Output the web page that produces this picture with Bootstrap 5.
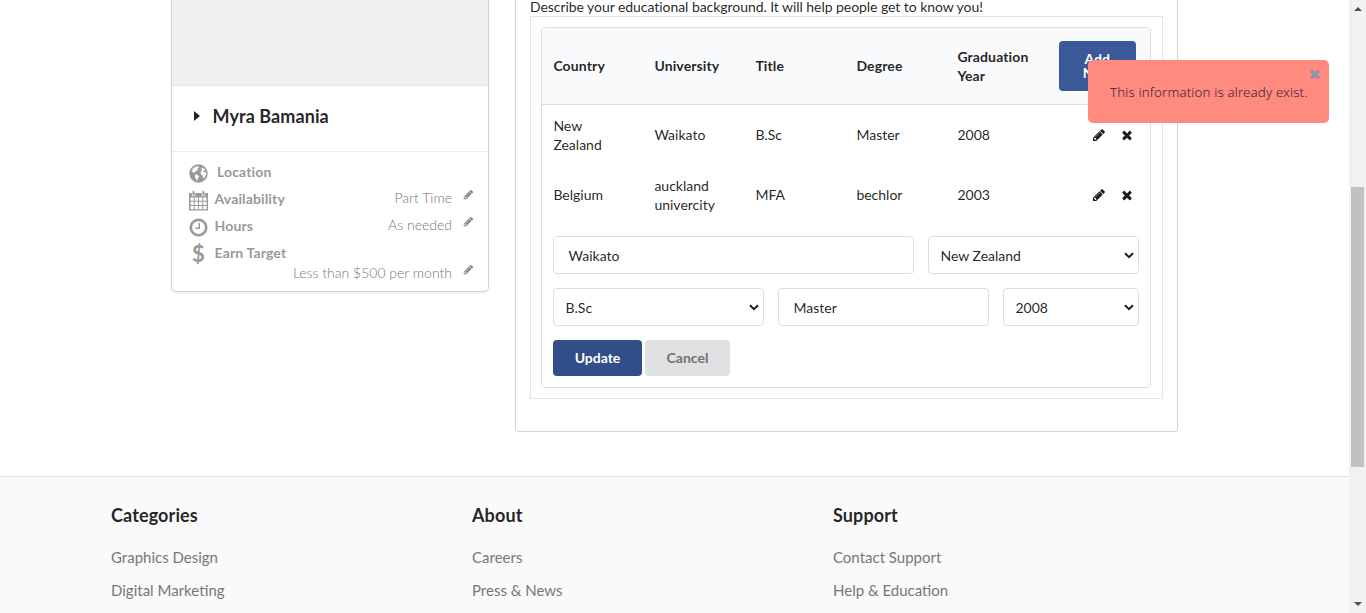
<!DOCTYPE html>
<html lang="en">
<head>
<meta charset="utf-8">
<title>Profile</title>
<meta name="viewport" content="width=device-width, initial-scale=1">
<link href="https://cdn.jsdelivr.net/npm/bootstrap@5.3.0/dist/css/bootstrap.min.css" rel="stylesheet">
<script src="https://cdn.jsdelivr.net/npm/bootstrap@5.3.0/dist/js/bootstrap.bundle.min.js" defer></script>
<style>
html,body{height:100%;overflow:hidden}
body{font-family:Lato,"Liberation Sans",sans-serif;font-size:14px;line-height:19px;color:rgba(0,0,0,.87);background:#fff}
.upper{height:476px;padding-left:172px;gap:27px}
.profile{width:316px;height:291px;border-radius:0 0 4px 4px;box-shadow:0 1px 3px 0 #d4d4d5,0 0 0 1px #d4d4d5}
.photo{height:86px;background:#f0f0f0;border-bottom:1px solid #e6e6e6}
.person{height:66px;border-bottom:1px solid #ececec;padding:0 0 4px 22px;font-size:18px;font-weight:700;letter-spacing:.08px}
.caret{width:0;height:0;border:5px solid transparent;border-left:6px solid #222;border-right:0;margin:-2px 12.5px 0 0}
.facts{padding:10px 14px 0 16px;color:#999}
.fact{height:27px}
.fact b{font-weight:700;letter-spacing:.14px}
.fact .ico{width:21px;height:21px;margin:1px 5.5px 0 0;fill:#999}
.val{font-weight:300;color:#777;font-size:14px;margin-top:-1px}
.val.last{margin-top:0}
.val svg{width:11px;height:11px;fill:#888;margin:-11px 0 0 11px}
.fact .dollar{font-size:22px;line-height:20px;text-align:center;font-weight:700}
.segment{width:663px;height:432px;border:1px solid #d4d4d5;border-top:0;border-radius:0 0 4px 4px;padding:0 14px}
.intro{height:16px;line-height:19px;margin-top:-3px;letter-spacing:-.055px}
.frame{height:383px;border:1px solid #e3e4e5;padding:10px 11px 10px 10px;margin-top:3px}
.sheet{height:361px;border:1px solid #dededf;border-radius:4px;overflow:hidden}
.line{display:grid;grid-template-columns:repeat(6,101px);height:60px;align-items:center;padding-bottom:1px}
.line>*{padding:0 11px 0 11.4px}
.line.top{height:77px;background:#f9fafb;border-bottom:1px solid #dededf;font-weight:700;letter-spacing:.12px}
.tools{gap:14px;padding-right:14px!important}
.line svg{width:14px;height:14px;fill:#1b1c1d}
.btn-add{width:77px;height:50px;margin-left:.4px;background:#3b5998;color:#fff;font-weight:700;line-height:14px;border-radius:4px;padding:0 20px;border:0;font-size:14px}
.fields{padding:11px 11px 0;gap:14px}
.fld{height:38px;border:1px solid #dededf;border-radius:4px;font-size:14px;padding:0 14px 0 14.5px;background:#fff}
.pick{padding:0 4px 0 11.5px}
.pick svg{width:10px;height:7px;margin-top:1px}
.act{height:36px;border:0;border-radius:4px;font-size:14px;font-weight:700;line-height:14px;padding:0}
.toast-note{position:absolute;left:1088px;top:60px;width:241px;height:63px;background:#ff8a80;border-radius:5px;padding:23px 0 0 22px;font-family:"Noto Sans",sans-serif;font-weight:300;color:#3c2034;font-size:13.3px;letter-spacing:.14px;white-space:nowrap}
.toast-note svg{position:absolute;right:7px;top:7px;width:14px;height:14px;fill:#8a94b0}
.foot{height:137px;border-top:1px solid #e1e2e3;background:#fafafa;padding:27px 0 0 111px}
.foot section{width:361px}
.foot h4{font-size:18px;line-height:22px;font-weight:700;margin:0 0 15px;color:rgba(0,0,0,.87);letter-spacing:.12px}
.foot a{display:block;font-size:15px;line-height:33px;color:#777;text-decoration:none}
.rail{width:17px;height:613px;background:#f1f1f1;padding:7px 0}
.rail i{width:0;height:0;border:4px solid transparent}
.rail .up{border-top:0;border-bottom-color:#505050}
.rail .down{border-bottom:0;border-top-color:#505050;margin-top:135px}
.thumb{width:13px;height:280px;background:#c1c1c1;margin-top:176px}
</style>
</head>
<body>
<svg class="d-none">
<symbol id="pen" viewBox="0 0 1792 1792"><path d="M491 1536l91-91-235-235-91 91v107h128v128h107zm523-928q0-22-22-22-10 0-17 7l-542 542q-7 7-7 17 0 22 22 22 10 0 17-7l542-542q7-7 7-17zm-54-192l416 416-832 832h-416v-416zm683 96q0 53-37 90l-166 166-416-416 166-165q36-38 90-38 53 0 91 38l235 234q37 39 37 91z"/></symbol>
<symbol id="x" viewBox="0 0 1792 1792"><path d="M1490 1322q0 40-28 68l-136 136q-28 28-68 28t-68-28l-294-294-294 294q-28 28-68 28t-68-28l-136-136q-28-28-28-68t28-68l294-294-294-294q-28-28-28-68t28-68l136-136q28-28 68-28t68 28l294 294 294-294q28-28 68-28t68 28l136 136q28 28 28 68t-28 68l-294 294 294 294q28 28 28 68z"/></symbol>
<symbol id="chev" viewBox="0 0 10 7"><path d="M1 1.2 5 5.2 9 1.2" fill="none" stroke="#1b1c1d" stroke-width="2"/></symbol>
</svg>
<div class="d-flex">
<div class="flex-grow-1">
<main class="upper d-flex align-items-start">
<aside class="profile">
<div class="photo"></div>
<div class="person d-flex align-items-center"><span class="caret"></span>Myra Bamania</div>
<div class="facts">
<div class="fact d-flex"><svg class="ico" viewBox="0 0 21 21"><circle cx="10.5" cy="10.5" r="9.2"/><path fill="#fff" d="M4 8.6 4.6 6 6.8 4 9.8 3.2 11.2 4.2 9.4 5.6 10.2 6.8 8 7.8 6.8 9.6 5.2 9.4ZM7.4 11.2 9.8 11.8 11 13.3 10 15.2 8.6 17.8 7.8 15.6 6.8 13.4ZM14 4.4 16.4 5.8 17.8 8 16.2 7.2 15 8.4 16.5 9.2 18.4 9.8 17.8 12.6 15.8 15.4 15 14.8 14.6 12.4 12.8 11.2 12.6 9 14 7.2 13.2 5.8Z"/></svg><b style="padding-left:2.5px">Location</b></div>
<div class="fact d-flex"><svg class="ico" viewBox="0 0 21 21"><path d="M1 3H20V20.5H1Z"/><path fill="#fff" d="M2.5 7.5H5.7V10.8H2.5ZM6.7 7.5H10V10.8H6.7ZM11 7.5H14.3V10.8H11ZM15.3 7.5H18.6V10.8H15.3ZM2.5 11.8H5.7V15H2.5ZM6.7 11.8H10V15H6.7ZM11 11.8H14.3V15H11ZM15.3 11.8H18.6V15H15.3ZM2.5 16H5.7V19.3H2.5ZM6.7 16H10V19.3H6.7ZM11 16H14.3V19.3H11ZM15.3 16H18.6V19.3H15.3Z"/><path stroke="#fff" stroke-width=".7" d="M4.2.8H7V5.7H4.2ZM14 .8H16.8V5.7H14Z"/></svg><b>Availability</b><span class="val ms-auto">Part Time<svg><use href="#pen"/></svg></span></div>
<div class="fact d-flex"><svg class="ico" viewBox="0 0 1792 1792"><path d="M1024 544v448q0 14-9 23t-23 9h-320q-14 0-23-9t-9-23v-64q0-14 9-23t23-9h224v-352q0-14 9-23t23-9h64q14 0 23 9t9 23zm416 352q0-148-73-273t-198-198-273-73-273 73-198 198-73 273 73 273 198 198 273 73 273-73 198-198 73-273zm224 0q0 209-103 385.5t-279.5 279.5-385.5 103-385.5-103-279.5-279.5-103-385.5 103-385.5 279.5-279.5 385.5-103 385.5 103 279.5 279.5 103 385.5z"/></svg><b>Hours</b><span class="val ms-auto">As needed<svg><use href="#pen"/></svg></span></div>
<div class="fact d-flex" style="height:20px"><span class="ico dollar">$</span><b>Earn Target</b></div>
<div class="d-flex"><span class="val last ms-auto">Less than $500 per month<svg><use href="#pen"/></svg></span></div>
</div>
</aside>
<section class="segment">
<div class="intro">Describe your educational background. It will help people get to know you!</div>
<div class="frame"><div class="sheet">
<div class="line top"><span>Country</span><span>University</span><span>Title</span><span>Degree</span><span>Graduation Year</span><span><button class="btn-add">Add New</button></span></div>
<div class="line"><span>New Zealand</span><span>Waikato</span><span>B.Sc</span><span>Master</span><span>2008</span><span class="tools d-flex justify-content-end"><svg><use href="#pen"/></svg><svg><use href="#x"/></svg></span></div>
<div class="line"><span>Belgium</span><span>auckland univercity</span><span>MFA</span><span>bechlor</span><span>2003</span><span class="tools d-flex justify-content-end"><svg><use href="#pen"/></svg><svg><use href="#x"/></svg></span></div>
<div class="fields d-flex"><div class="fld d-flex align-items-center" style="width:361px">Waikato</div><div class="fld pick d-flex align-items-center justify-content-between" style="width:211px">New Zealand<svg><use href="#chev"/></svg></div></div>
<div class="fields d-flex" style="padding-top:14px"><div class="fld pick d-flex align-items-center justify-content-between" style="width:211px">B.Sc<svg><use href="#chev"/></svg></div><div class="fld d-flex align-items-center" style="width:211px">Master</div><div class="fld pick d-flex align-items-center justify-content-between" style="width:136px">2008<svg><use href="#chev"/></svg></div></div>
<div class="fields d-flex" style="padding-top:14px;gap:3px"><button class="act" style="width:89px;background:#314e89;color:#fff">Update</button><button class="act" style="width:85px;background:#e0e1e2;color:#707172">Cancel</button></div>
</div></div>
</section>
</main>
<footer class="foot d-flex">
<section><h4>Categories</h4><a href="#">Graphics Design</a><a href="#">Digital Marketing</a></section>
<section><h4>About</h4><a href="#">Careers</a><a href="#">Press &amp; News</a></section>
<section><h4>Support</h4><a href="#">Contact Support</a><a href="#">Help &amp; Education</a></section>
</footer>
</div>
<div class="rail d-flex flex-column align-items-center flex-shrink-0"><i class="up"></i><div class="thumb"></div><i class="down"></i></div>
</div>
<div class="toast-note">This information is already exist.<svg><use href="#x"/></svg></div>
</body>
</html>
